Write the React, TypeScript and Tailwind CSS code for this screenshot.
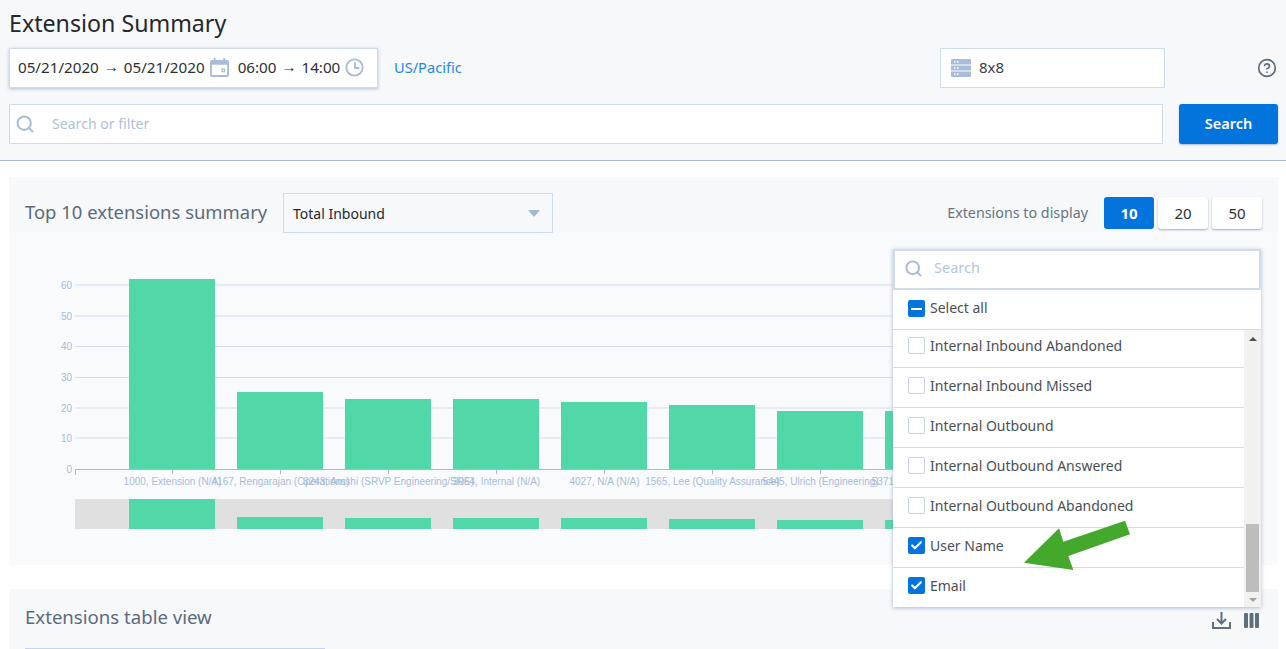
import { Check, CircleHelp, Search } from "lucide-react";

const bars = [
  { x: 129, top: 279, mini: 499 },
  { x: 237, top: 392, mini: 517 },
  { x: 345, top: 399, mini: 518 },
  { x: 453, top: 399, mini: 518 },
  { x: 561, top: 402, mini: 518 },
  { x: 669, top: 405, mini: 519 },
  { x: 777, top: 411, mini: 520 },
  { x: 885, top: 411, mini: 520 },
];
const labels = [
  "1000, Extension (N/A)",
  "4167, Rengarajan (Operations)",
  "3243, Amshi (SRVP Engineering/SRE)",
  "3064, Internal (N/A)",
  "4027, N/A (N/A)",
  "1565, Lee (Quality Assurance)",
  "5445, Ulrich (Engineering)",
  "5371, Patel (Engineering)",
];
const ticks = [
  { v: 60, y: 285 },
  { v: 50, y: 316 },
  { v: 40, y: 346.5 },
  { v: 30, y: 377.5 },
  { v: 20, y: 408 },
  { v: 10, y: 438 },
  { v: 0, y: 469 },
];
const rows = [
  { t: "Internal Inbound Missed" },
  { t: "Internal Outbound" },
  { t: "Internal Outbound Answered" },
  { t: "Internal Outbound Abandoned" },
  { t: "User Name", on: true },
];

function Box({ on }: { on?: boolean }) {
  return on ? (
    <span className="flex h-[17px] w-[17px] shrink-0 items-center justify-center rounded-[2px] bg-[#0274dc]">
      <Check size={13} strokeWidth={4} className="text-white" />
    </span>
  ) : (
    <span className="h-[17px] w-[17px] shrink-0 rounded-[2px] border border-[#c3d2e6] bg-white" />
  );
}

function Arrow() {
  return <span className="relative top-[-1px] mx-[5px] text-[15px] leading-none">→</span>;
}

export default function App() {
  return (
    <div className="relative h-[649px] w-[1286px] overflow-hidden bg-white font-['Noto_Sans',sans-serif] text-[#2b2f36]">
      <header className="h-[161px] border-b border-[#a9bddb] bg-[#f6f8fa] pl-[9px] pr-[8px]">
        <h1 className="h-[48px] pt-[7px] text-[23.2px] leading-[32px] text-[#24282e]">Extension Summary</h1>
        <div className="flex h-[40px] items-center">
          <div className="flex h-[40px] w-[369px] items-center border border-[#cfdcec] bg-white pb-px pl-[8px] text-[15.2px] shadow-[0_1px_3px_rgba(120,145,185,0.55)]">
            <span>05/21/2020</span>
            <Arrow />
            <span>05/21/2020</span>
            <svg width="19" height="19" viewBox="0 0 20 20" className="ml-[5px] shrink-0 text-[#a9bdd8]">
              <path fill="currentColor" fillRule="evenodd" d="M4 0h2v2h8V0h2v2h2a2 2 0 0 1 2 2v14a2 2 0 0 1-2 2H2a2 2 0 0 1-2-2V4a2 2 0 0 1 2-2h2V0zM2 7v11h16V7H2zm10 4h4v4h-4v-4zm1.300 1.300v1.400h1.400v-1.400h-1.400z" />
            </svg>
            <span className="ml-[9px]">06:00</span>
            <Arrow />
            <span>14:00</span>
            <svg width="19" height="19" viewBox="0 0 20 20" fill="none" stroke="currentColor" strokeWidth="2" className="ml-[5px] shrink-0 text-[#a9bdd8]">
              <circle cx="10" cy="10" r="8.600" />
              <path d="M10.500 4.500v6H15" />
            </svg>
          </div>
          <span className="ml-[16px] w-[68px] text-[14.6px] whitespace-nowrap text-[#1f88e6]">US/Pacific</span>
          <div className="ml-[478px] flex h-[40px] w-[225px] items-center border border-[#cfdcec] bg-white pl-[10px] text-[15px] text-[#3a3f46]">
            <svg width="20" height="20" viewBox="0 0 20 20" className="shrink-0 text-[#a9bdd8]">
              <path fill="currentColor" fillRule="evenodd" d="M1 1h18a1 1 0 0 1 1 1v4.400H0V2a1 1 0 0 1 1-1zm-1 6.400h20v5.200H0V7.400zm0 6.200h20V18a1 1 0 0 1-1 1H1a1 1 0 0 1-1-1v-4.400zM3 3v1.400h1.500V3H3zm3 0v1.400h1.500V3H6zM3 9.300v1.400h1.500V9.300H3zm3 0v1.400h1.500V9.300H6zM3 15.500v1.400h1.500v-1.400H3zm3 0v1.400h1.500v-1.400H6z" />
            </svg>
            <span className="relative top-[-1px] ml-[8px]">8x8</span>
          </div>
          <CircleHelp size={20} strokeWidth={2} className="ml-[92px] text-[#5f6b78]" />
        </div>
        <div className="mt-[16px] flex h-[40px]">
          <div className="flex h-[40px] w-[1154px] items-center border border-[#cfdcec] bg-white pl-[5px] text-[14.1px] text-[#aebfd8]">
            <Search size={20} strokeWidth={2.500} className="text-[#a9bdd8]" />
            <span className="ml-[17px]">Search or filter</span>
          </div>
          <button className="ml-[16px] h-[40px] w-[99px] rounded-[3px] bg-[#0274dc] text-[14.5px] font-semibold text-white shadow-[0_1px_2px_rgba(120,145,185,0.6)]">Search</button>
        </div>
      </header>

      <section className="mx-[9px] mt-[16px] h-[388px] w-[1269px] bg-[#f6f8fa]">
        <div className="flex h-[56px] items-end pl-[16px] pr-[16px]">
          <div className="flex h-[40px] flex-1 items-center">
            <h2 className="relative top-[-1px] w-[242px] text-[18.45px] whitespace-nowrap text-[#5b6b7c]">Top 10 extensions summary</h2>
            <div className="ml-[16px] flex h-[40px] w-[270px] items-center justify-between border border-[#cfdcec] pl-[9px] pr-[12px] text-[14px] text-[#24282e]">
              <span>Total Inbound</span>
              <span className="h-0 w-0 border-x-[6px] border-t-[7px] border-x-transparent border-t-[#a3b8d4]" />
            </div>
          </div>
          <div className="flex h-[40px] items-center">
            <span className="mr-[16px] text-[14.3px] text-[#66747f]">Extensions to display</span>
            <div className="flex gap-[4px]">
              <button className="h-[32px] w-[50px] rounded-[3px] bg-[#0274dc] text-[15px] font-bold text-white">10</button>
              <button className="h-[32px] w-[50px] rounded-[3px] bg-white text-[15px] shadow-[0_1px_2px_rgba(120,145,185,0.7)]">20</button>
              <button className="h-[32px] w-[50px] rounded-[3px] bg-white text-[15px] shadow-[0_1px_2px_rgba(120,145,185,0.7)]">50</button>
            </div>
          </div>
        </div>
        <svg width="1269" height="332" viewBox="9 233 1269 332" className="block font-['Liberation_Sans',sans-serif]">
          <rect x="9" y="233" width="1269" height="332" fill="#f8fafc" />
          {ticks.map((t) => (
            <g key={t.v}>
              {t.v > 0 && <line x1="75" x2="1240" y1={t.y} y2={t.y} stroke="#d5deeb" />}
              <text x="72" y={t.y + 3.5} textAnchor="end" fontSize="10" fill="#a8bcd8">{t.v}</text>
            </g>
          ))}
          <rect x="75" y="499" width="1170" height="30" fill="#e0e0e0" />
          {bars.map((b, i) => (
            <g key={b.x}>
              <rect x={b.x} y={b.top} width="86" height={469 - b.top} fill="#52d7a9" />
              <rect x={b.x} y={b.mini} width="86" height={529 - b.mini} fill="#52d7a9" />
              <line x1={b.x + 43.5} x2={b.x + 43.5} y1="469" y2="474" stroke="#a8b8d0" />
              <text x={b.x + 43.5} y="485" textAnchor="middle" fontSize="10" fill="#a8bcd8">{labels[i]}</text>
            </g>
          ))}
          <line x1="75" x2="1240" y1="469.500" y2="469.500" stroke="#a8b8d0" />
          <line x1="75.500" x2="75.500" y1="469" y2="475" stroke="#a8b8d0" />
        </svg>
      </section>

      <section className="mx-[9px] mt-[24px] h-[80px] w-[1269px] bg-[#f6f8fa] pl-[16px] pr-[16px]">
        <div className="flex h-[59px] items-center justify-between">
          <h2 className="relative top-[-2px] text-[18.6px] text-[#5b6b7c]">Extensions table view</h2>
          <div className="mr-[3px] mt-[3px] flex items-center gap-[13px] text-[#5f6f80]">
            <svg width="19" height="18" viewBox="0 0 19 18" fill="none" stroke="currentColor" strokeWidth="2">
              <path d="M1 11v6h17v-6M9.500 1v11M5 8l4.500 4.500L14 8" />
            </svg>
            <svg width="15" height="15" viewBox="0 0 15 15" fill="currentColor">
              <rect x="0" y="0" width="4" height="15" rx="1" />
              <rect x="5.500" y="0" width="4" height="15" rx="1" />
              <rect x="11" y="0" width="4" height="15" rx="1" />
            </svg>
          </div>
        </div>
        <div className="h-px w-[300px] bg-[#c5d4e8]" />
      </section>

      <div className="absolute left-[893px] top-[249px] flex h-[358px] w-[368px] flex-col bg-white text-[14px] text-[#4a4f55] shadow-[0_1px_4px_rgba(120,145,185,0.6)]">
        <div className="flex h-[41px] shrink-0 items-center border-2 border-[#d0dcea] pb-[3px] pl-[9px] text-[14.500px] text-[#b4c6df]">
          <Search size={19} strokeWidth={2.500} className="text-[#a9bdd8]" />
          <span className="ml-[11px]">Search</span>
        </div>
        <div className="flex h-[40px] shrink-0 items-start gap-[5px] border-b border-[#d0dcea] pl-[15px] pt-[10px]">
          <span className="flex h-[17px] w-[17px] items-center justify-center rounded-[2px] bg-[#0274dc]">
            <span className="h-[2px] w-[11px] bg-white" />
          </span>
          <span className="relative top-[-1px] leading-[17px]">Select all</span>
        </div>
        <div className="flex min-h-0 flex-1">
          <div className="flex-1">
            <div className="flex h-[38px] items-start gap-[5px] border-b border-[#d0dcea] pl-[15px] pt-[7px]">
              <Box />
              <span className="leading-[17px]">Internal Inbound Abandoned</span>
            </div>
            {rows.map((r) => (
              <div key={r.t} className="flex h-[40px] items-start gap-[5px] border-b border-[#d0dcea] pl-[15px] pt-[9px]">
                <Box on={r.on} />
                <span className="leading-[17px]">{r.t}</span>
              </div>
            ))}
            <div className="flex h-[40px] items-start gap-[5px] pl-[15px] pt-[9px]">
              <Box on />
              <span className="leading-[17px]">Email</span>
            </div>
          </div>
          <div className="flex w-[17px] shrink-0 flex-col items-center bg-[#f1f1f1]">
            <span className="mt-[7px] h-0 w-0 border-x-[4px] border-b-[4px] border-x-transparent border-b-[#505050]" />
            <span className="mt-[183px] h-[68px] w-[13px] bg-[#bdbdbd]" />
            <span className="mt-[6px] h-0 w-0 border-x-[4px] border-t-[4px] border-x-transparent border-t-[#a3a3a3]" />
          </div>
        </div>
      </div>

      <svg width="108" height="52" viewBox="1024 520 108 52" className="absolute left-[1024px] top-[520px]">
        <polygon fill="#43a82c" points="1125,520.700 1130,534.300 1068.300,556 1073.300,570 1024,562.700 1059,528.300 1063.300,541.700" />
      </svg>
    </div>
  );
}
